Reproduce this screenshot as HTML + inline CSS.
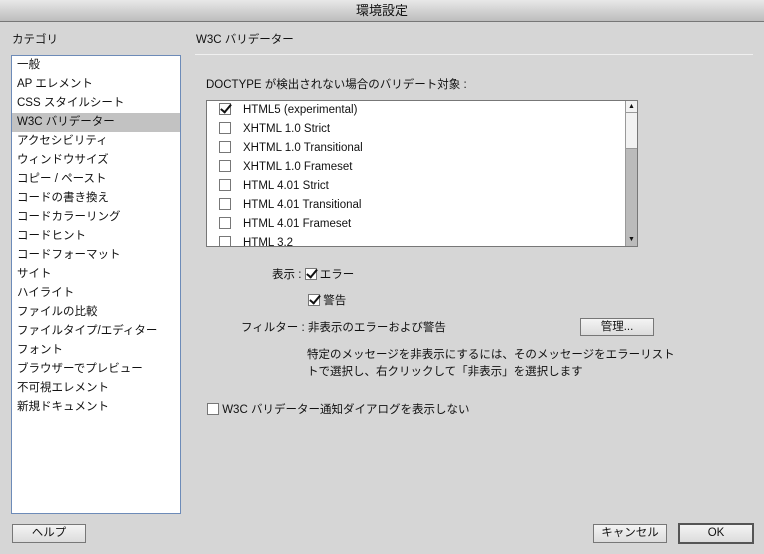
<!DOCTYPE html>
<html><head><meta charset="utf-8"><style>
*{margin:0;padding:0;box-sizing:border-box}
body{width:764px;height:554px;background:#d6d6d6;font-family:"Liberation Sans","Noto Sans CJK JP",sans-serif;font-size:11.5px;color:#111;position:relative;overflow:hidden}
.abs{position:absolute;white-space:nowrap}
#title{left:0;top:0;width:764px;height:22px;background:linear-gradient(#e8e8e8,#bdbdbd);border-bottom:1px solid #777;text-align:center;line-height:22px;font-size:13px}
#left{left:11px;top:55px;width:170px;height:459px;background:#fff;border:1px solid #6d8bb8}
#left div{height:19px;line-height:19px;padding-left:5px}
#left .sel{background:#c2c2c2}
.box{display:inline-block;width:12px;height:12px;border:1px solid #777;background:#fff;vertical-align:-2px;position:relative}
.chk::after{content:"";position:absolute;left:3px;top:-2px;width:4px;height:9px;border:solid #111;border-width:0 2px 2px 0;transform:rotate(40deg)}
#lb{left:206px;top:100px;width:432px;height:147px;background:#fff;border:1px solid #777;overflow:hidden}
#lb .r{position:absolute;left:12px;height:19px;line-height:19px}
#lb .r .box{margin-right:12px}
#sb{position:absolute;right:0;top:0;width:12px;height:145px;background:#bbb;border-left:1px solid #999}
.btn{position:absolute;background:linear-gradient(#f4f4f4,#dcdcdc);border:1px solid #777;text-align:center;font-size:11.5px}
</style></head><body>
<div class="abs" id="title">環境設定</div>
<div class="abs" style="left:12px;top:31px">カテゴリ</div>
<div class="abs" style="left:196px;top:31px">W3C バリデーター</div>
<div class="abs" style="left:195px;top:54px;width:558px;height:1px;background:#b0b0b0;border-bottom:1px solid #f0f0f0"></div>
<div class="abs" id="left">
<div>一般</div><div>AP エレメント</div><div>CSS スタイルシート</div><div class="sel">W3C バリデーター</div><div>アクセシビリティ</div><div>ウィンドウサイズ</div><div>コピー / ペースト</div><div>コードの書き換え</div><div>コードカラーリング</div><div>コードヒント</div><div>コードフォーマット</div><div>サイト</div><div>ハイライト</div><div>ファイルの比較</div><div>ファイルタイプ/エディター</div><div>フォント</div><div>ブラウザーでプレビュー</div><div>不可視エレメント</div><div>新規ドキュメント</div>
</div>
<div class="abs" style="left:206px;top:76px">DOCTYPE が検出されない場合のバリデート対象 :</div>
<div class="abs" id="lb">
<div class="r" style="top:0"><span class="box chk"></span>HTML5 (experimental)</div>
<div class="r" style="top:19px"><span class="box"></span>XHTML 1.0 Strict</div>
<div class="r" style="top:38px"><span class="box"></span>XHTML 1.0 Transitional</div>
<div class="r" style="top:57px"><span class="box"></span>XHTML 1.0 Frameset</div>
<div class="r" style="top:76px"><span class="box"></span>HTML 4.01 Strict</div>
<div class="r" style="top:95px"><span class="box"></span>HTML 4.01 Transitional</div>
<div class="r" style="top:114px"><span class="box"></span>HTML 4.01 Frameset</div>
<div class="r" style="top:133px"><span class="box"></span>HTML 3.2</div>
<div id="sb"><div style="height:12px;background:#f2f2f2;border-bottom:1px solid #999;font-size:7px;text-align:center;line-height:12px">▲</div><div style="height:36px;background:#f2f2f2;border-bottom:1px solid #999"></div><div style="position:absolute;bottom:0;width:11px;height:12px;font-size:7px;text-align:center;line-height:12px">▼</div></div>
</div>
<div class="abs" style="left:272px;top:266px">表示 : <span class="box chk"></span> エラー</div>
<div class="abs" style="left:308px;top:292px"><span class="box chk"></span> 警告</div>
<div class="abs" style="left:241px;top:319px">フィルター : 非表示のエラーおよび警告</div>
<div class="btn" style="left:580px;top:318px;width:74px;height:18px;line-height:16px">管理...</div>
<div class="abs" style="left:307px;top:346px">特定のメッセージを非表示にするには、そのメッセージをエラーリスト</div>
<div class="abs" style="left:307px;top:363px">トで選択し、右クリックして「非表示」を選択します</div>
<div class="abs" style="left:207px;top:401px"><span class="box"></span> W3C バリデーター通知ダイアログを表示しない</div>
<div class="btn" style="left:12px;top:524px;width:74px;height:19px;line-height:17px">ヘルプ</div>
<div class="btn" style="left:593px;top:524px;width:74px;height:19px;line-height:17px">キャンセル</div>
<div class="btn" style="left:678px;top:523px;width:76px;height:21px;line-height:17px;border:2px solid #555">OK</div>
</body></html>
